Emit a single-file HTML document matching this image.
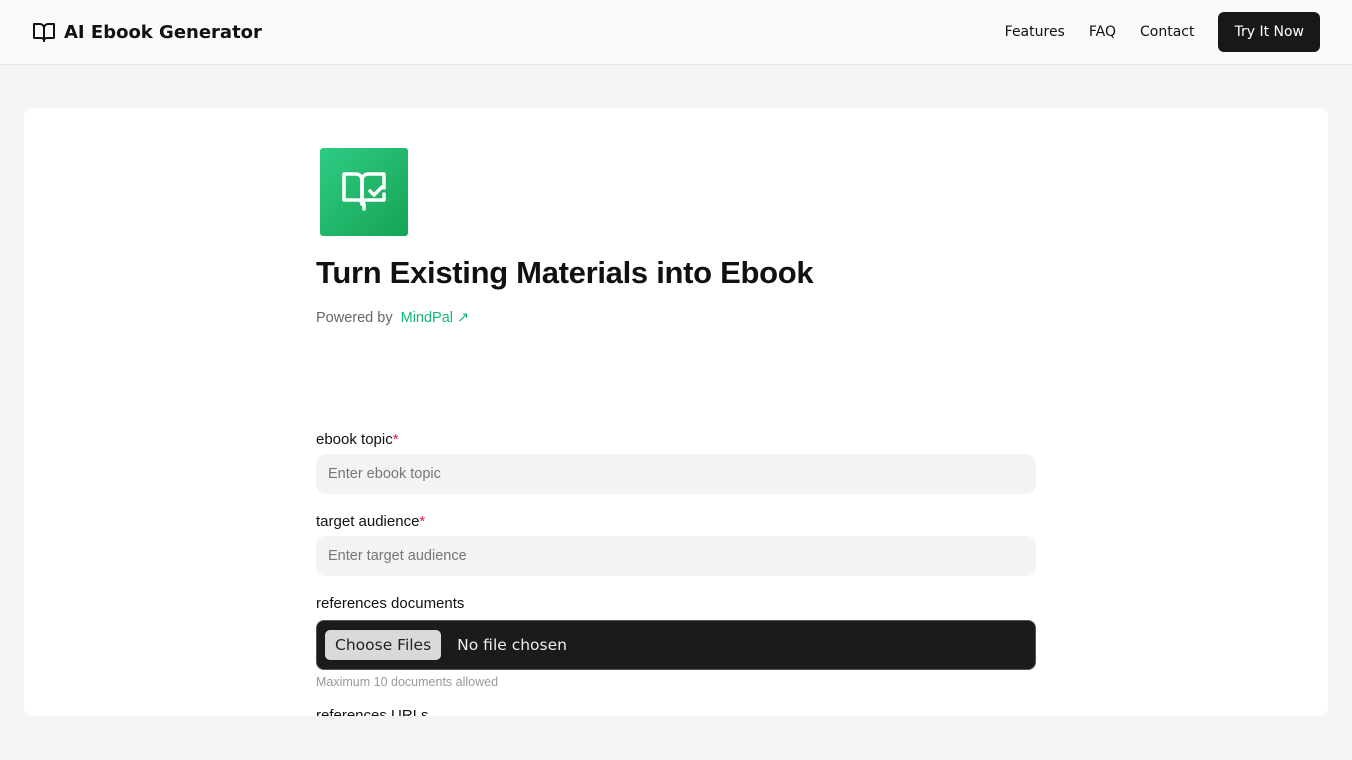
<!DOCTYPE html>
<html><head><style>
*{box-sizing:border-box;margin:0;padding:0}
body{width:1352px;height:760px;overflow:hidden;background:#f4f4f4;font-family:"Liberation Sans",sans-serif;color:#111}
.nav{height:65px;background:#fafafa;border-bottom:1px solid #e5e5e5;position:relative}
.logo{position:absolute;left:32px;top:20px;display:flex;align-items:center;gap:8px;font-family:"DejaVu Sans",sans-serif;font-weight:bold;font-size:18px}
.links{position:absolute;right:32px;top:12px;display:flex;align-items:center;font-size:14px;font-family:"DejaVu Sans",sans-serif}
.links span{margin-right:24px}
.btn{background:#18181b;color:#fff;border-radius:6px;padding:0 16px;height:40px;line-height:40px;font-size:14px}
.card{position:absolute;left:24px;top:108px;width:1304px;height:608px;background:#fff;border-radius:8px;overflow:hidden}
.in{position:absolute;left:292px;width:720px}
.icon{position:absolute;left:296px;top:40px;width:88px;height:88px;border-radius:3px;background:linear-gradient(135deg,#2ecc84,#16a354)}
h1{position:absolute;left:292px;top:147px;font-size:31px;font-weight:bold;letter-spacing:-0.3px}
.pw{position:absolute;left:292px;top:202px;font-size:14.5px;color:#666}
.pw b{font-weight:normal;color:#14b876;margin-left:4px}
.lbl{font-size:15px}
.lbl i{color:#e11d48;font-style:normal}
.inp{height:40px;background:#f3f3f4;border-radius:10px;padding-left:12px;line-height:40px;font-size:14.5px;color:#777}
.file{height:50px;background:#1b1b1e;border-radius:8px;border:1px solid #555;display:flex;align-items:center;padding-left:8px;color:#eee;font-family:"DejaVu Sans",sans-serif;font-size:15.5px}
.file span.c{background:#d9d9dc;color:#222;border-radius:5px;padding:6px 10px;margin-right:16px}
</style></head><body>
<div class="nav">
<div class="logo"><svg width="24" height="24" viewBox="0 0 24 24" fill="none" stroke="#111" stroke-width="2" stroke-linejoin="round"><path d="M2 4h6a4 4 0 0 1 4 4v13a3 3 0 0 0-3-3H2z"/><path d="M22 4h-6a4 4 0 0 0-4 4v13a3 3 0 0 1 3-3h7z"/></svg>AI Ebook Generator</div>
<div class="links"><span>Features</span><span>FAQ</span><span>Contact</span><div class="btn">Try It Now</div></div>
</div>
<div class="card">
<div class="icon"><svg width="88" height="88" viewBox="0 0 88 88" fill="none" stroke="#fff" stroke-width="3.5" stroke-linejoin="round" stroke-linecap="round"><path d="M24 26h12a6 6 0 0 1 6 6v24a4 4 0 0 0-4-4H24z"/><path d="M42 56V32a6 6 0 0 1 6-6h16v14"/><path d="M42 56a4 4 0 0 1 4-4h18V46"/><path d="M50 43l4 4 8-8"/><path d="M44 56v5"/></svg></div>
<h1>Turn Existing Materials into Ebook</h1>
<div class="pw">Powered by <b>MindPal ↗</b></div>
<div class="in" style="top:323px"><div class="lbl">ebook topic<i>*</i></div></div>
<div class="in" style="top:346px"><div class="inp">Enter ebook topic</div></div>
<div class="in" style="top:405px"><div class="lbl">target audience<i>*</i></div></div>
<div class="in" style="top:428px"><div class="inp">Enter target audience</div></div>
<div class="in" style="top:487px"><div class="lbl">references documents</div></div>
<div class="in" style="top:512px"><div class="file"><span class="c">Choose Files</span>No file chosen</div></div>
<div class="in" style="top:567px;font-size:12.5px;color:#999">Maximum 10 documents allowed</div>
<div class="in" style="top:599px"><div class="lbl">references URLs</div></div>
</div>
</body></html>
